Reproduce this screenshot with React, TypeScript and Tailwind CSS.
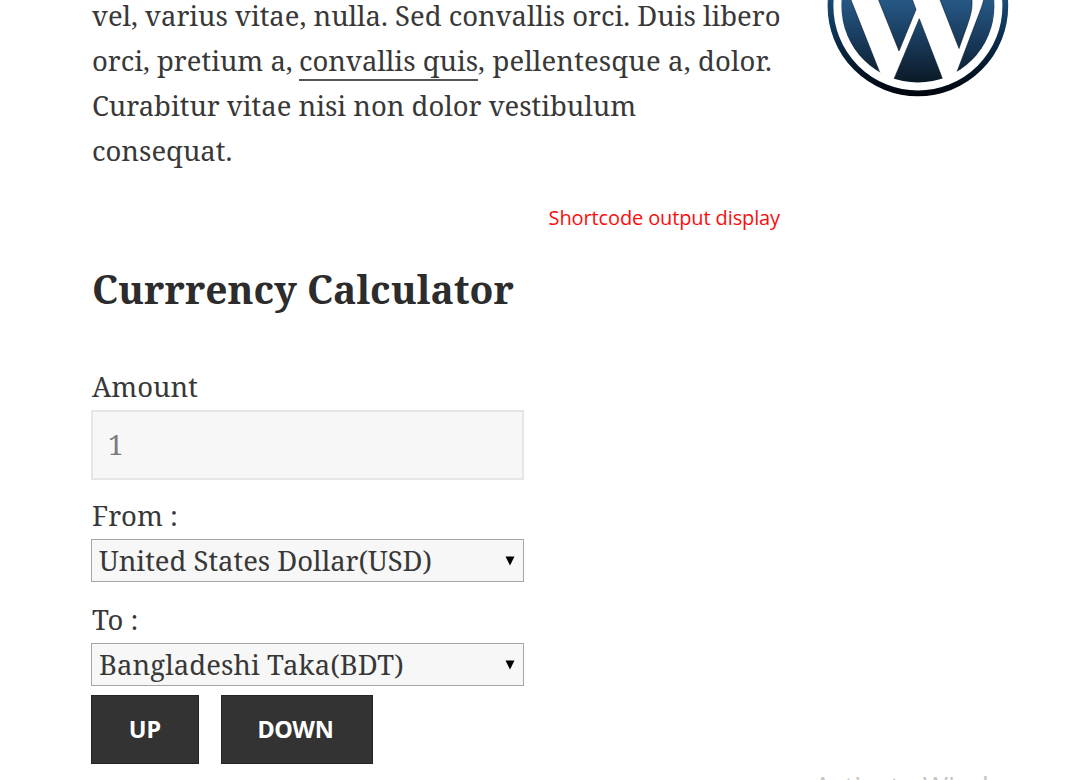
import type { ReactNode } from "react";

function WordPressMark() {
  return (
    <svg className="block h-[110px] w-[220px]" viewBox="0 0 220 110" aria-label="WordPress">
      <defs>
        <linearGradient id="ring" gradientUnits="userSpaceOnUse" x1="0" y1="0" x2="0" y2="96">
          <stop offset="0" stopColor="#174a75" />
          <stop offset="0.5" stopColor="#082742" />
          <stop offset="1" stopColor="#00040c" />
        </linearGradient>
        <linearGradient id="disc" gradientUnits="userSpaceOnUse" x1="0" y1="0" x2="0" y2="83">
          <stop offset="0" stopColor="#265885" />
          <stop offset="0.5" stopColor="#18395a" />
          <stop offset="1" stopColor="#0b1925" />
        </linearGradient>
        <clipPath id="inner">
          <circle cx="107.9" cy="6" r="76.5" />
        </clipPath>
      </defs>
      <circle cx="107.9" cy="6" r="87.4" fill="none" stroke="url(#ring)" strokeWidth="5.8" />
      <g clipPath="url(#inner)" fill="url(#disc)" stroke="#061a2d" strokeWidth="0.6">
        <path d="M20 -4H39.4L70.2 73.5L20 84Z" />
        <path d="M67 -4L89 51L106 9.5L101 -4Z" />
        <path d="M109.3 18.7L83.8 79.5L82 90H135L132.8 79.5Z" />
        <path d="M128.5 -4L149 48.5L157 26Q162 12 162 5V-4Z" />
        <path d="M174.5 -4Q173 4 170.5 10L146.5 73L190 90V-4Z" />
      </g>
    </svg>
  );
}

function Label({ children }: { children: ReactNode }) {
  return <span className="h-[45px] whitespace-pre pl-px leading-[43px]">{children}</span>;
}

function Select({ children }: { children: ReactNode }) {
  return (
    <div className="flex h-[43px] w-[433px] items-center justify-between border border-[#a6a6a6] bg-[#f7f7f7] pr-[8px] pl-[7px]">
      <span className="whitespace-nowrap leading-[41px]">{children}</span>
      <svg className="h-[10px] w-[10px]" viewBox="0 0 10 10">
        <path d="M0.5 0.5H9.5L5 9.5Z" fill="#000" />
      </svg>
    </div>
  );
}

export default function App() {
  return (
    <div className="flex h-[780px] w-[1070px] overflow-hidden bg-white font-['Noto_Serif','DejaVu_Serif_Condensed',serif] text-[27.45px] text-[#383838]">
      <main className="flex w-[719px] shrink-0 flex-col pl-[91px]">
        <p className="-mt-[6px] flex flex-col pl-px leading-[44.8px] whitespace-nowrap">
          <span>vel, varius vitae, nulla. Sed convallis orci. Duis libero</span>
          <span className="flex">
            <span className="w-[207px] shrink-0">orci, pretium a,</span>
            <a className="mb-[3px] h-[42px] border-b-2 border-[#5a5555]">convallis quis</a>
            <span className="tracking-[0.15px]">, pellentesque a, dolor.</span>
          </span>
          <span>Curabitur vitae nisi non dolor vestibulum</span>
          <span>consequat.</span>
        </p>
        <p className="mt-[31px] -mr-[61px] self-end font-['Open_Sans',sans-serif] text-[20px] leading-[28px] tracking-[-0.12px] whitespace-nowrap text-[#fb0d0d]">
          Shortcode output display
        </p>
        <h2 className="mt-[33px] h-[48px] pl-px text-[39px] leading-[47px] font-bold whitespace-nowrap text-[#2c2c2c]">
          Currrency Calculator
        </h2>
        <form className="mt-[52px] flex flex-col items-start">
          <Label>Amount</Label>
          <div className="flex h-[70px] w-[433px] items-center border-2 border-[#e6e6e6] bg-[#f7f7f7] pl-[15px] leading-[40px] text-[#7c7c7c]">1</div>
          <div className="mt-[14px] flex flex-col">
            <Label>From :</Label>
            <Select>United States Dollar(USD)</Select>
          </div>
          <div className="mt-[16px] flex flex-col">
            <Label>To :</Label>
            <Select><span className="tracking-[0.08px]">Bangladeshi Taka(BDT)</span></Select>
          </div>
          <div className="mt-[9px] flex gap-[22px] font-['Noto_Sans',sans-serif] text-[23.5px] font-bold text-white">
            <button type="button" className="h-[69px] w-[108px] border border-[#242424] bg-[#333]">UP</button>
            <button type="button" className="h-[69px] w-[152px] border border-[#242424] bg-[#333] pr-[3px] tracking-[-0.3px]">DOWN</button>
          </div>
        </form>
      </main>
      <aside className="flex h-[780px] flex-1 flex-col justify-between pl-[91px]">
        <WordPressMark />
        <div className="h-[7px] overflow-hidden">
          <p className="pl-[4px] font-['Open_Sans',sans-serif] text-[27.5px] leading-[28px] whitespace-nowrap text-[#c4c4c4]">Activate Wind</p>
        </div>
      </aside>
    </div>
  );
}
